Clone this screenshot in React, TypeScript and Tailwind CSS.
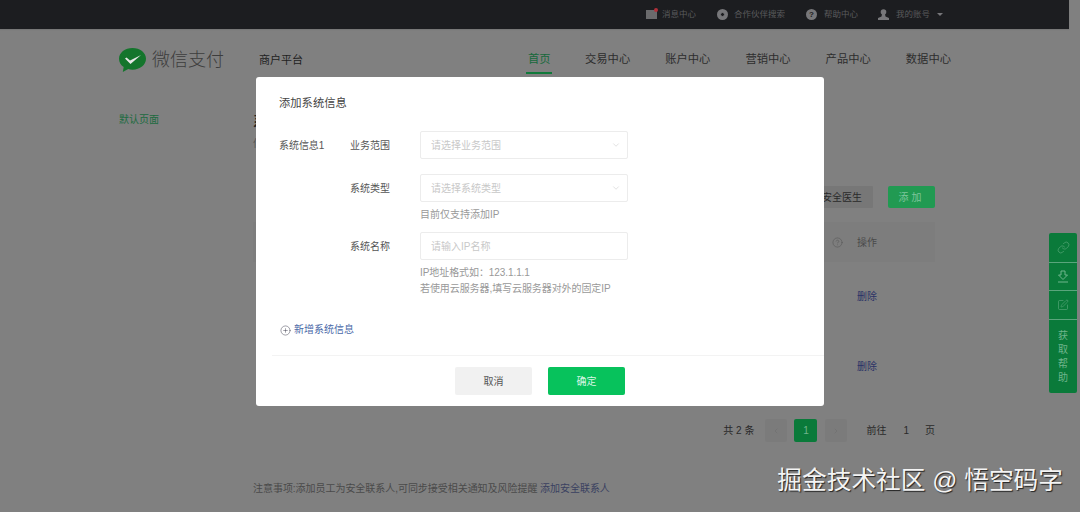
import React from "react";
import { ChevronDown, ChevronLeft, ChevronRight, CirclePlus, CircleHelp, Link, SquarePen } from "lucide-react";

const font = { fontFamily: '"Liberation Sans", "Noto Sans CJK SC", sans-serif' };

function Logo() {
  return (
    <svg width="27" height="25" viewBox="0 0 27 25">
      <path d="M13.5 0C6 0 0 4.700 0 10.800c0 3.400 1.800 6.300 4.700 8.300L3.800 24l5.400-2.900c1.400.4 2.800.6 4.300.6 7.500 0 13.500-4.800 13.500-10.900S21 0 13.500 0z" fill="#14752c" />
      <path d="M6 10.500l1.500-1 3.500 3L22 7l-10.500 9z" fill="#e8e8e8" />
    </svg>
  );
}

function TopIcon({ kind }: { kind: string }) {
  if (kind === "mail")
    return (
      <span className="relative block h-[9px] w-[11px] bg-[#6a6a6c]">
        <span className="absolute -right-[1px] -top-[2px] h-[4px] w-[4px] rounded-full bg-[#b0303a]" />
      </span>
    );
  if (kind === "target")
    return (
      <span className="flex h-[11px] w-[11px] items-center justify-center rounded-full bg-[#77777a]">
        <span className="h-[5px] w-[5px] rounded-full border border-[#77777a] bg-[#1c1d20]" />
      </span>
    );
  if (kind === "help")
    return (
      <span className="flex h-[11px] w-[11px] items-center justify-center rounded-full bg-[#77777a] text-[8px] font-bold leading-none text-[#1c1d20]">?</span>
    );
  return (
    <svg width="11" height="11" viewBox="0 0 11 11">
      <circle cx="5.500" cy="3" r="2.800" fill="#77777a" />
      <path d="M4 5h3l.5 2.500L11 9v2H0V9l3.500-1.500z" fill="#77777a" />
    </svg>
  );
}

function Field({ label, placeholder, select, children }: { label: string; placeholder: string; select?: boolean; children?: React.ReactNode }) {
  return (
    <div className="flex">
      <div className="flex h-[28px] w-[70px] items-center text-[10px] text-[#555555]">{label}</div>
      <div className="w-[208px]">
        <div className="flex h-[28px] items-center justify-between rounded-[2px] border border-[#ececec] pl-[10px] pr-[6px] text-[10px] text-[#c8c8c8]">
          <span>{placeholder}</span>
          {select && <ChevronDown size={10} strokeWidth={1.2} color="#c4c4c4" />}
        </div>
        {children}
      </div>
    </div>
  );
}

export default function App() {
  return (
    <div className="relative h-[512px] w-[1080px] overflow-hidden bg-[#808080]" style={font}>
      <div className="flex h-[29px] w-[1069px] items-center justify-end bg-[#1c1d20] pr-[126px] text-[8.500px] text-[#5a5a5c] shadow-[0_1px_1px_#777]">
        <div className="flex items-center gap-[5px]"><TopIcon kind="mail" /><span>消息中心</span></div>
        <div className="ml-[21px] flex items-center gap-[6px]"><TopIcon kind="target" /><span>合作伙伴搜索</span></div>
        <div className="ml-[21px] flex items-center gap-[7px]"><TopIcon kind="help" /><span>帮助中心</span></div>
        <div className="ml-[20px] flex items-center gap-[7px]">
          <TopIcon kind="user" /><span>我的账号</span>
          <span className="h-0 w-0 border-x-[3px] border-t-[3px] border-x-transparent border-t-[#77777a]" />
        </div>
      </div>

      <header className="flex h-[47px] items-stretch pl-[119px]">
        <div className="flex w-[409px] items-center pt-[15px]">
          <Logo />
          <span className="ml-[6px] text-[18px] font-light leading-none text-[#3d3d3d]">微信支付</span>
          <span className="ml-[35px] text-[11px] text-[#222222]">商户平台</span>
        </div>
        <nav className="flex gap-[35px] pt-[22px] text-[11.300px] leading-[16px] text-[#2d2d2d]">
          <span className="relative -mr-[1px] w-[23px] text-[#17693c]">
            首页
            <span className="absolute -left-[2px] top-[21px] h-[2px] w-[26px] bg-[#107a3a]" />
          </span>
          <span>交易中心</span>
          <span>账户中心</span>
          <span>营销中心</span>
          <span>产品中心</span>
          <span>数据中心</span>
        </nav>
      </header>

      <div className="flex pl-[119px] pt-[37px]">
        <aside className="w-[134px] text-[10px] leading-[14px] text-[#1c6b3f]">默认页面</aside>
        <main className="flex w-[682px] flex-col">
          <h1 className="text-[14px] font-bold leading-[16px] text-[#222222]">系统信息</h1>
          <p className="mt-[8px] text-[10px] leading-[14px] text-[#555555]">信息</p>
          <div className="mt-[35px] flex items-center justify-end gap-[15px]">
            <span className="flex h-[22px] items-center rounded-[1px] bg-[#777777] px-[11px] text-[10px] text-[#2a2a2a]">安全医生</span>
            <span className="flex h-[22px] w-[47px] items-center justify-center rounded-[2px] bg-[#219a52] text-[10px] tracking-[3px] text-[#7fc59c]">添加</span>
          </div>
          <div className="mt-[14px] flex h-[40px] items-center bg-[#7d7d7d] pl-[579px] text-[10px] text-[#4a4a4a]">
            <CircleHelp size={11} strokeWidth={1} color="#505050" />
            <span className="ml-[14px]">操作</span>
          </div>
          <div className="-mt-[1px] flex h-[70px] items-center pl-[604px] text-[10px] text-[#2b3266]">删除</div>
          <div className="flex h-[70px] items-center pl-[604px] text-[10px] text-[#2b3266]">删除</div>
          <div className="mt-[18px] flex h-[23px] items-center justify-end text-[10px] text-[#2a2a2a]">
            <span>共 2 条</span>
            <span className="ml-[11px] flex h-[23px] w-[22px] items-center justify-center rounded-[2px] bg-[#7b7b7b]"><ChevronLeft size={8} color="#707070" /></span>
            <span className="ml-[7px] flex h-[23px] w-[23px] items-center justify-center rounded-[2px] bg-[#0a7a3a] text-[#6fb58c]">1</span>
            <span className="ml-[8px] flex h-[23px] w-[22px] items-center justify-center rounded-[2px] bg-[#7b7b7b]"><ChevronRight size={8} color="#707070" /></span>
            <span className="ml-[19px]">前往</span>
            <span className="ml-[17px]">1</span>
            <span className="ml-[16px]">页</span>
          </div>
          <p className="mt-[40px] whitespace-nowrap text-[10px] leading-[14px] tracking-[-0.04px] text-[#4a4a4a]">
            注意事项:添加员工为安全联系人,可同步接受相关通知及风险提醒 <span className="text-[#3a4060]">添加安全联系人</span>
          </p>
        </main>
      </div>

      <div className="absolute right-[3px] top-[233px] flex w-[28px] flex-col overflow-hidden rounded-[2px] bg-[#0a7a3a] text-[#6fb58c]">
        <span className="flex h-[29px] items-center justify-center"><Link size={13} strokeWidth={1} /></span>
        <span className="flex h-[28px] items-center justify-center border-t border-[#5aa57c]">
          <svg width="12" height="13" viewBox="0 0 12 13" fill="none" stroke="currentColor" strokeWidth="1">
            <path d="M4 1h4v4h2.500L6 9.500 1.500 5H4zM1 12h10" />
          </svg>
        </span>
        <span className="flex h-[29px] items-center justify-center border-t border-[#5aa57c]"><SquarePen size={12} strokeWidth={1} /></span>
        <span className="flex h-[74px] flex-col items-center justify-center gap-[2px] border-t border-[#5aa57c] text-[10px] leading-[12px]">
          <span>获</span><span>取</span><span>帮</span><span>助</span>
        </span>
      </div>

      <div className="absolute bottom-[14px] right-[17px] whitespace-nowrap text-[24.700px] leading-[34px] text-[#f4f4f4] [text-shadow:1px_1px_1px_#222]">
        掘金技术社区 @ 悟空码字
      </div>

      <div className="absolute left-[256px] top-[77px] flex h-[329px] w-[568px] flex-col rounded-[3px] bg-white">
        <div className="pl-[23px] pt-[18px] text-[11.300px] leading-[16px] text-[#444444]">添加系统信息</div>
        <div className="flex pl-[23px] pt-[20px]">
          <div className="flex h-[28px] w-[71px] items-center text-[10px] tracking-[-0.05px] text-[#555555]">系统信息1</div>
          <div className="flex flex-col gap-[15px]">
            <Field label="业务范围" placeholder="请选择业务范围" select />
            <Field label="系统类型" placeholder="请选择系统类型" select>
              <div className="mt-[5px] h-[16px] text-[10px] leading-[16px] text-[#999999]">目前仅支持添加IP</div>
            </Field>
            <div className="-mt-[6px]">
              <Field label="系统名称" placeholder="请输入IP名称">
                <div className="mt-[5px] text-[10px] leading-[16px] tracking-[-0.08px] text-[#999999]">
                  <div>IP地址格式如：123.1.1.1</div>
                  <div>若使用云服务器,填写云服务器对外的固定IP</div>
                </div>
              </Field>
            </div>
          </div>
        </div>
        <div className="mt-[26px] flex items-center gap-[3px] pl-[24px] text-[10px] leading-[14px] text-[#4a69a8]">
          <CirclePlus size={11} strokeWidth={1} color="#334" />
          新增系统信息
        </div>
        <div className="ml-[16px] mt-[18px] border-t border-[#f3f3f3]" />
        <div className="flex justify-center gap-[16px] pt-[11px]">
          <button className="h-[28px] w-[77px] rounded-[2px] bg-[#f1f1f1] text-[10px] text-[#555555]">取消</button>
          <button className="h-[28px] w-[77px] rounded-[2px] bg-[#07c25c] text-[10px] text-[#d9f6e5]">确定</button>
        </div>
      </div>
    </div>
  );
}
